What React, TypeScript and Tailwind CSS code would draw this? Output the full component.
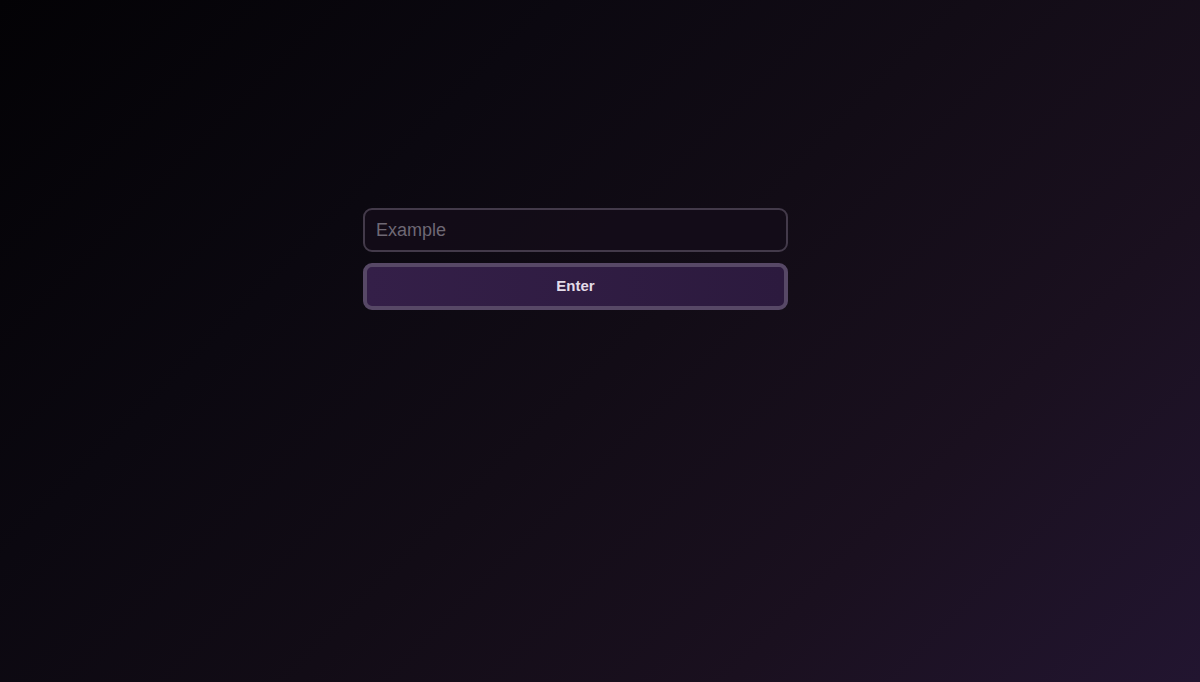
import React from "react";

export default function App() {
  return (
    <div
      className="w-full h-[682px] overflow-hidden bg-[linear-gradient(135deg,#030205_0%,#0b0810_30%,#120c16_52%,#1a101f_75%,#221530_100%)] flex flex-col items-start pt-[208px] pl-[363px]"
      style={{ fontFamily: '"Liberation Sans", Arial, sans-serif' }}
    >
      <div className="w-[425px] flex flex-col gap-[11px]">
        <input
          type="text"
          placeholder="Example"
          className="w-full h-[44px] rounded-[9px] border-2 border-[#433a4a] bg-[#140c19]/80 px-[11px] text-[18px] text-[#d0c8d6] placeholder:text-[#6e6874] outline-none"
        />
        <button className="w-full h-[47px] rounded-[9px] border-4 border-[#574866] bg-[linear-gradient(90deg,#341f48,#2c1a3e)] text-[15px] font-bold text-[#e2dbe8]">
          Enter
        </button>
      </div>
    </div>
  );
}
